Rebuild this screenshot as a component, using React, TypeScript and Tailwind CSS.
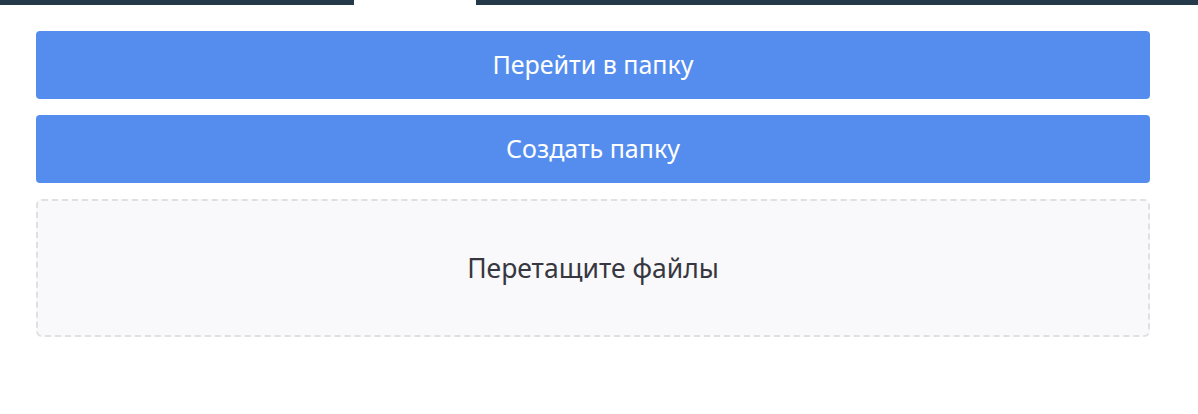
export default function App() {
  return (
    <div className="min-h-[414px] bg-white" style={{ fontFamily: '"Noto Sans", "Open Sans", sans-serif' }}>
      <div className="flex h-[5px]">
        <div className="w-[354px] bg-[#243a4a]" />
        <div className="w-[122px]" />
        <div className="flex-1 bg-[#243a4a]" />
      </div>
      <div className="ml-[36px] w-[1114px] pt-[26px] flex flex-col gap-4">
        <button className="h-[68px] rounded-[4px] bg-[#558dee] text-white text-[25px] leading-none pb-[2px]">
          Перейти в папку
        </button>
        <button className="h-[68px] rounded-[4px] bg-[#558dee] text-white text-[25px] leading-none pb-[2px]">
          Создать папку
        </button>
        <div className="h-[138px] rounded-[6px] border-2 border-dashed border-[#e0e0e4] bg-[#f9f9fb] flex items-center justify-center text-[26.5px] leading-none text-[#363740]">
          Перетащите файлы
        </div>
      </div>
    </div>
  );
}
